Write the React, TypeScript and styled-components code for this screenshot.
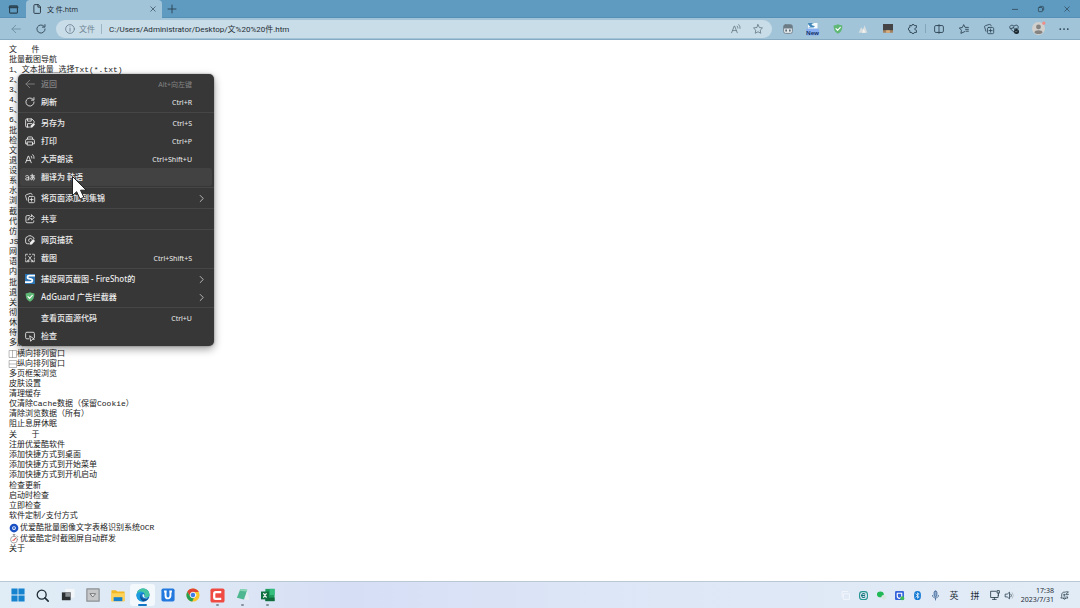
import React from "react";
import styled, { createGlobalStyle } from "styled-components";

const GlobalStyle = createGlobalStyle`
  * { box-sizing: border-box; }
  body {
    margin: 0;
    background: #fff;
    font-family: "Noto Sans", "Noto Sans CJK SC", sans-serif;
    font-size: 8px;
    color: #1f2d36;
  }
  button, input {
    font: inherit;
    color: inherit;
    border: 0;
    padding: 0;
    margin: 0;
    background: none;
  }
`;

/* ---------- layout ---------- */

const Screen = styled.div`
  min-height: 100vh;
  display: grid;
  grid-template-rows: auto 1fr auto;
`;

const TitleBar = styled.header`
  display: flex;
  align-items: stretch;
  height: 18px;
  background: #5f9bc0;
  box-shadow: inset 0 -1px 0 #5690b4;
`;

const IconButton = styled.button<{ $w?: number; $tone?: string }>`
  width: ${(p) => p.$w ?? 25}px;
  flex: none;
  display: flex;
  align-items: center;
  justify-content: center;
  color: ${(p) => p.$tone ?? "#2b4250"};
`;

const Tab = styled.div`
  width: 136px;
  display: flex;
  align-items: center;
  gap: 5px;
  padding: 0 5px 0 6px;
  border-radius: 4px 4px 0 0;
  background: #a2c4d9;
  font-size: 7px;
`;

const TabTitle = styled.span`
  flex: 1;
  white-space: pre;
`;

const WindowButtons = styled.div`
  display: flex;
  margin-left: auto;
`;

const Toolbar = styled.nav`
  display: flex;
  align-items: center;
  height: 22px;
  padding: 0 4px 0 3px;
  background: #a2c4d9;
  border-bottom: 1px solid #86aac1;
`;

const AddressBar = styled.div`
  flex: 1;
  display: flex;
  align-items: center;
  height: 18px;
  margin: 0 3px;
  padding: 0 3px 0 9px;
  border-radius: 9px;
  background: #c9dde8;
`;

const SiteInfo = styled.span`
  display: flex;
  align-items: center;
  gap: 4px;
  padding-right: 6px;
  margin-right: 7px;
  border-right: 1px solid #9db5c3;
  line-height: 9px;
  color: #6d8391;
`;

const AddressInput = styled.input`
  flex: 1;
  min-width: 0;
  height: 14px;
  outline: none;
  font-family: Roboto, "Noto Sans CJK SC", sans-serif;
`;

const ToolDivider = styled.span`
  width: 1px;
  height: 9px;
  background: #84a6bb;
`;

const Page = styled.main`
  position: relative;
  padding: 5px 9px 16px;
  background: #fff;
`;

const Group = styled.ul`
  list-style: none;
  margin: 0 0 1px;
  padding: 0;
`;

const Line = styled.li<{ $tall?: boolean }>`
  display: flex;
  align-items: center;
  gap: ${(p) => (p.$tall ? 1 : 0)}px;
  height: ${(p) => (p.$tall ? 11 : 10)}px;
  line-height: 10px;
  white-space: pre;
  font-family: "Liberation Mono", "Noto Sans CJK SC", monospace;
  color: #222;
`;

/* ---------- context menu ---------- */

const Menu = styled.div`
  position: absolute;
  left: 18px;
  top: 34px;
  width: 196px;
  padding: 1px 0;
  border-radius: 5px;
  background: #373737;
  box-shadow: 0 3px 8px rgba(0, 0, 0, 0.4), 0 0 2px rgba(0, 0, 0, 0.4);
  color: #ececec;
`;

const MenuSection = styled.div`
  & + & {
    margin-top: 1px;
    padding-top: 1px;
    border-top: 1px solid #464646;
  }
`;

const MenuButton = styled.button<{ $hot?: boolean }>`
  display: grid;
  grid-template-columns: 16px 1fr auto 14px;
  align-items: center;
  width: calc(100% - 4px);
  height: 18px;
  margin: 0 2px;
  padding-left: 5px;
  border-radius: 3px;
  text-align: left;
  white-space: pre;
  background: ${(p) => (p.$hot ? "#424242" : "transparent")};
  &:disabled { color: #858585; }
`;

const Label = styled.span`
  padding-bottom: 2px;
  font-weight: 500;
`;

const Shortcut = styled.span`
  font-size: 7px;
  padding-right: 6px;
`;

const Pointer = styled.svg`
  position: absolute;
  left: 71px;
  top: 135px;
  width: 17px;
  height: 26px;
  pointer-events: none;
`;

/* ---------- task bar ---------- */

const TaskBar = styled.footer`
  display: flex;
  align-items: stretch;
  height: 27px;
  padding: 0 6px 0 5px;
  border-top: 1px solid #b9c8d3;
  background: linear-gradient(90deg, #e0edf6 0%, #dce6f5 22%, #d5def5 32%, #dde6f6 55%, #e2ecf6 100%);
`;

const AppButton = styled.button<{ $state?: "open" | "active" }>`
  position: relative;
  width: 25px;
  height: 22px;
  margin-top: 2px;
  display: flex;
  align-items: center;
  justify-content: center;
  border-radius: 3px;
  background: ${(p) => (p.$state === "active" ? "#f3f8fc" : "none")};
  &::after {
    content: "";
    display: ${(p) => (p.$state ? "block" : "none")};
    position: absolute;
    bottom: 0;
    width: ${(p) => (p.$state === "active" ? 9 : 3)}px;
    height: 2px;
    border-radius: 1px;
    background: ${(p) => (p.$state === "active" ? "#1274c5" : "#85909b")};
  }
`;

const Tray = styled.div`
  display: flex;
  margin-left: auto;
`;

const InputMode = styled.button<{ $w: number }>`
  width: ${(p) => p.$w}px;
  font-size: 9px;
`;

const Clock = styled.time`
  display: flex;
  flex-direction: column;
  justify-content: center;
  width: 40px;
  font-size: 7px;
  line-height: 9px;
  text-align: right;
`;

/* ---------- icons ---------- */

const Svg = styled.svg<{ $s: number }>`
  width: ${(p) => p.$s}px;
  height: ${(p) => p.$s}px;
  flex: none;
  overflow: visible;
`;

function Icon({ s = 10, w = 1.4, children }: { s?: number; w?: number; children: React.ReactNode }) {
  return (
    <Svg $s={s} viewBox="0 0 16 16" fill="none" stroke="currentColor" strokeWidth={w} strokeLinecap="round" strokeLinejoin="round" aria-hidden="true">
      {children}
    </Svg>
  );
}

const Back = () => <Icon><path d="M15 8H1.5M7.5 2 1.5 8l6 6" /></Icon>;
const Reload = () => <Icon><path d="M14.5 8A6.5 6.5 0 1 1 12.8 3.6M14.3 1v4h-4" /></Icon>;
const Close = () => <Icon s={6} w={1.8}><path d="m2 2 12 12M14 2 2 14" /></Icon>;
const Chevron = () => <Icon s={7} w={1.6}><path d="m5 1 7 7-7 7" /></Icon>;
const Star = ({ lines }: { lines?: boolean }) => (
  <Icon>
    {lines ? (
      <path d="M9.5 12 3 15l.9-5L.5 6.3l4.8-.6L7.5 1l2.2 4.4H15M10.5 8.5H15M11.5 11.5H15" />
    ) : (
      <path d="m8 1 2.2 4.6 5 .7-3.6 3.5.8 5L8 12.4l-4.4 2.4.8-5L.8 6.3l5-.7Z" />
    )}
  </Icon>
);
const ReadAloud = () => (
  <Icon><path d="M1 14 5.2 3.2h.6L10 14M2.5 10.5h6M10 3.5a4 4 0 0 1 1 3M12.5 1a7 7 0 0 1 2 6" /></Icon>
);
const Collections = () => (
  <Icon w={1.3}>
    <rect x="5.5" y="5.5" width="10" height="10" rx="2" />
    <path d="M10.5 8v5M8 10.5h5M3 11.5 1 5a2 2 0 0 1 1.3-2.400L8.500.7A2 2 0 0 1 11 2l.3 1" />
  </Icon>
);
const Shield = ({ s = 10 }: { s?: number }) => (
  <Icon s={s}>
    <path d="M8 .5c2 1.200 4.500 1.800 7 1.800 0 6-1.500 10.500-7 13.200C2.500 12.800 1 8.300 1 2.300 3.500 2.300 6 1.700 8 .5Z" fill="#5fb875" stroke="none" />
    <path d="m4.800 7.500 2.500 2.800 4.400-5" stroke="#fff" strokeWidth="1.800" />
  </Icon>
);
const FireShot = () => (
  <Icon s={10}>
    <path d="M0 0h16v16H0z" fill="#2c76b8" stroke="none" />
    <path d="M16 2.500H6.500C3.500 2.500 3 7 6 7.500l4 .8c3 .7 2 4.700-1 4.700H0" stroke="#fff" strokeWidth="3" strokeLinecap="butt" />
  </Icon>
);
const FireShotNew = () => (
  <Svg $s={13} viewBox="0 0 26 26" aria-hidden="true">
    <path d="M4 2h19v12H4z" fill="#f7fbfd" />
    <path d="M4 2h12C9 4 10 7 18 8l-3 3H4l5-2C5 7 4 5 4 2Z" fill="#4388ba" />
    <rect x="0" y="13" width="26" height="14" rx="3" fill="#86aef0" />
    <text x="13" y="25" textAnchor="middle" fontSize="12" fontWeight="600" fontFamily="Noto Sans, sans-serif" fill="#102a5c">New</text>
  </Svg>
);

const SaveAs = () => (
  <Icon>
    <path d="M7 14.500H3a2 2 0 0 1-2-2V3.500a2 2 0 0 1 2-2h8l3.500 3.500v3M4 1.500v3.500h6V1.500M4 14.500V9h7" />
    <path d="m8.500 15.500.5-3 4.500-4.500 2.500 2.500-4.500 4.500Z" fill="currentColor" stroke="none" />
  </Icon>
);
const Print = () => (
  <Icon>
    <path d="M4 5V3a1.500 1.500 0 0 1 1.500-1.500h5A1.500 1.500 0 0 1 12 3v2M4 12.500H1V7.500a2.500 2.500 0 0 1 2.500-2.500h9A2.500 2.500 0 0 1 15 7.500v5h-3M4 9.500h8v5H4z" />
  </Icon>
);
const Translate = () => (
  <Icon>
    <path d="M1 6.500c2-1.500 5-1 5 1V13M6 9c-3-.5-5 .5-5 2.200C1 13.500 5 13.500 6 11M9 6h6M11.500 3.500v8M14 7.500c-1 3-2.500 5-4 5s-2-4.500 2.500-4.500c4 0 3.500 4.500 1 5" />
  </Icon>
);
const Share = () => (
  <Icon>
    <path d="M7 2.500H3.500a2 2 0 0 0-2 2v7.500a2 2 0 0 0 2 2H12a2 2 0 0 0 2-2v-1M10.500 1.500l4.500 4-4.500 4V7.200C8 7 6 8 4.800 10c.2-3.500 2.200-6 5.700-6.200Z" />
  </Icon>
);
const WebCapture = () => (
  <Icon>
    <path d="M6.500 14H4a3 3 0 0 1-3-3V6a3 3 0 0 1 3-3l1.500-1.700h4.500L11.500 3A3 3 0 0 1 14.500 6M6.500 10.500a3 3 0 1 1 4.500-4" />
    <path d="m7.500 15.500.5-3.500L13 6.500 16 9.500 11 15Z" fill="currentColor" stroke="none" />
  </Icon>
);
const Snip = () => (
  <Icon w={1.2}>
    <path d="M1 5V2h3M7 2h2M12 2h3v3M15 8v2M1 8v2M1 12v2h2M15 12v2h-2M5.500 5l5 6.500M10.500 5l-5 6.500" />
    <circle cx="5" cy="13" r="1.300" /><circle cx="11" cy="13" r="1.300" />
  </Icon>
);
const Inspect = () => (
  <Icon>
    <path d="M6 12.500H3a2 2 0 0 1-2-2V4a2 2 0 0 1 2-2h10a2 2 0 0 1 2 2v6.500M8 8l7 5-3.500.5L9.500 16Z" />
  </Icon>
);

/* ---------- data ---------- */

const groups: string[][] = [
  ["文   件", "批量截图导航", "1、文本批量_选择Txt(*.txt)", "2、", "3、", "4、", "5、", "6、"],
  ["批", "检", "文", "退", "设", "系", "水", "浏"],
  ["截", "代", "仿", "JS", "网", "语", "内"],
  ["批", "退", "关", "彻", "休", "待", "多屏浏览 口口"],
  ["|横向排列窗口", "-纵向排列窗口", "多页框架浏览", "皮肤设置", "清理缓存", "仅清除Cache数据（保留Cookie）", "清除浏览数据（所有）", "阻止息屏休眠"],
  ["关   于", "注册优爱酷软件", "添加快捷方式到桌面", "添加快捷方式到开始菜单", "添加快捷方式到开机启动"],
  ["检查更新", "启动时检查", "立即检查", "软件定制/支付方式"],
];

type Item = { label: string; icon?: React.ReactNode; keys?: string; sub?: boolean; off?: boolean; hot?: boolean };

const menu: Item[][] = [
  [
    { label: "返回", icon: <Back />, keys: "Alt+向左键", off: true },
    { label: "刷新", icon: <Reload />, keys: "Ctrl+R" },
  ],
  [
    { label: "另存为", icon: <SaveAs />, keys: "Ctrl+S" },
    { label: "打印", icon: <Print />, keys: "Ctrl+P" },
    { label: "大声朗读", icon: <ReadAloud />, keys: "Ctrl+Shift+U" },
    { label: "翻译为 韩语", icon: <Translate />, hot: true },
  ],
  [{ label: "将页面添加到集锦", icon: <Collections />, sub: true }],
  [{ label: "共享", icon: <Share /> }],
  [
    { label: "网页捕获", icon: <WebCapture /> },
    { label: "截图", icon: <Snip />, keys: "Ctrl+Shift+S" },
  ],
  [
    { label: "捕捉网页截图 - FireShot的", icon: <FireShot />, sub: true },
    { label: "AdGuard 广告拦截器", icon: <Shield />, sub: true },
  ],
  [
    { label: "查看页面源代码", keys: "Ctrl+U" },
    { label: "检查", icon: <Inspect /> },
  ],
];

const extensions: [string, React.ReactNode][] = [
  ["脚本管理器", (
    <Icon>
      <rect x="1" y="1" width="14" height="14" rx="3" fill="#e4e9ec" stroke="#6b7c87" />
      <path d="M1 3.500A2.500 2.500 0 0 1 3.500 1h9A2.500 2.500 0 0 1 15 3.500V7H1Z" fill="#6b7c87" stroke="none" />
      <path d="M5 9.500v1.500M11 9.500v1.500" stroke="#51626d" strokeWidth="2.500" />
    </Icon>
  )],
  ["FireShot", <FireShotNew />],
  ["AdGuard", <Shield />],
  ["扩展", (
    <Icon>
      <path d="M1 14 5 5l3 4 2.500-7L15 14Z" fill="#d5dde0" stroke="none" />
      <path d="M6.500 14 9 7l3 7Z" fill="#f5f3ee" stroke="none" />
    </Icon>
  )],
  ["用户脚本", (
    <Icon>
      <path d="M0 0h16v11H0z" fill="#444446" stroke="none" />
      <path d="M0 10h16v4H0z" fill="#a5825c" stroke="none" />
      <path d="M5 10h6v4H5z" fill="#d8b183" stroke="none" />
    </Icon>
  )],
  ["扩展中心", (
    <Icon>
      <path d="M6 2.500a2 2 0 0 1 4 0h3.500V6c-3.500-.5-3.500 4.500 0 4v3.500H10a2 2 0 0 1-4 0H3V10.500a2.500 2.500 0 0 1 0-5V2.500Z" />
    </Icon>
  )],
];

const browserTools: [string, React.ReactNode][] = [
  ["拆分屏幕", <Icon><path d="M6 2.500H3a2 2 0 0 0-2 2v7a2 2 0 0 0 2 2h3M10 2.500h3a2 2 0 0 1 2 2v7a2 2 0 0 1-2 2h-3M6 2.500h4M6 13.500h4M8 1v14" /></Icon>],
  ["收藏夹", <Star lines />],
  ["集锦", <Collections />],
  ["浏览器概要", (
    <Icon>
      <path d="M8 13 2 7.500C-.5 4.500 3-.5 8 3.500c5-4 8 0 6.500 3.500M2.500 7h3L7 4.500 9 9l1.500-2H13" />
      <circle cx="12" cy="12" r="4" fill="#172329" stroke="none" />
      <path d="m10.500 12 1 1 2-2" stroke="#a2c4d9" strokeWidth="1" />
    </Icon>
  )],
  ["用户", (
    <Icon s={13}>
      <circle cx="8" cy="8" r="8" fill="#d1d0cd" stroke="none" />
      <circle cx="8" cy="6" r="3" fill="#858381" stroke="none" />
      <path d="M3 13c0-4 10-4 10 0-2 2.500-8 2.500-10 0Z" fill="#858381" stroke="none" />
      <circle cx="14.500" cy="1.500" r="2" fill="#f08d86" stroke="none" />
    </Icon>
  )],
  ["设置及其他", <Icon><path d="M2 8h.1M8 8h.1M14 8h.1" strokeWidth="2.800" /></Icon>],
];

const apps: { name: string; state?: "open" | "active"; art: React.ReactNode }[] = [
  { name: "开始", art: <Icon s={14}><path d="M.5.500h7v7h-7zM8.500.500h7v7h-7zM.5 8.500h7v7h-7zM8.500 8.500h7v7h-7z" fill="#1683cf" stroke="none" /></Icon> },
  { name: "搜索", art: <Icon s={13} w={1.6}><circle cx="7" cy="7" r="5.500" /><path d="m11 11 4 4" strokeWidth="2" /></Icon> },
  { name: "任务视图", art: <Icon s={14}><path d="M5 1h10.500v10H5z" fill="#f3f6f9" stroke="none" /><path d="M1 5h10v9H1z" fill="#2b2e31" stroke="none" /><path d="M5 5h6v5H5z" fill="#898e92" stroke="none" /></Icon> },
  { name: "工具", art: <Icon s={14}><path d="M1 1h14v14H1z" fill="#c5c7c9" stroke="#8e9194" /><path d="M5 6.500h6L8 10Z" fill="#f1f1f1" stroke="#66696c" strokeWidth="1" /></Icon> },
  { name: "文件资源管理器", art: <Icon s={14}><path d="M.5 2.500h5L7 4h8.500v11H.5z" fill="#f2b824" stroke="none" /><path d="M.5 6h15v9H.5z" fill="#ffd35a" stroke="none" /><path d="M3 10.500h10V15H3z" fill="#1780cc" stroke="none" /></Icon> },
  {
    name: "Edge", state: "active", art: (
      <Icon s={14}>
        <circle cx="8" cy="8" r="7.500" fill="#1479c9" stroke="none" />
        <path d="M.8 7C2-1.500 14-2 15.500 7c.3 4-4 4.500-6 3 2-3-1-5.500-4-5C3 5.300 1.500 6 .8 7Z" fill="#45c5a1" stroke="none" />
        <path d="M.6 7.500C3 2.500 8 3.500 9 6 6 5 4 7 4.500 10s3 5 5 5.300C4 16.500 0 12 .6 7.500Z" fill="#1b9de0" stroke="none" />
        <path d="M6 8c-1 3 2.500 6 8 4-2 3-5 4-7 2.500S4 9.500 6 8Z" fill="#124f96" stroke="none" />
        <path d="M7.500 7.500c1.500-1 2.500 0 2 1.500-.5 1.500 1.500 2.500 4 2-3 1.500-7 0-6-3.500Z" fill="#f3f8fc" stroke="none" />
      </Icon>
    ),
  },
  { name: "优爱酷", art: <Icon s={14}><rect x=".5" y=".5" width="15" height="15" rx="2" fill="#2379dd" stroke="none" /><path d="M3.500 4h3M9.500 4h3M5.200 4v4.500c0 4.500 5.600 4.500 5.600 0V4" stroke="#fff" strokeWidth="2.200" strokeLinecap="butt" /></Icon> },
  {
    name: "Chrome", art: (
      <Icon s={14}>
        <circle cx="8" cy="8" r="7.500" fill="#f9c62e" stroke="none" />
        <path d="M1.500 4.200A7.500 7.500 0 0 1 14.600 4.500H8L4.900 9.700Z" fill="#df4535" stroke="none" />
        <path d="M1.500 4.200 4.900 9.800 9 11.500 7.200 15.500A7.500 7.500 0 0 1 1.500 4.200Z" fill="#279f55" stroke="none" />
        <circle cx="8" cy="8" r="3.200" fill="#3d7ee8" stroke="#fff" strokeWidth="1" />
      </Icon>
    ),
  },
  { name: "Camtasia", state: "open", art: <Icon s={15}><rect x=".5" y=".5" width="15" height="15" rx="2" fill="#f04b43" stroke="none" /><path d="M12 4.500H6A1.500 1.500 0 0 0 4.500 6v4A1.500 1.500 0 0 0 6 11.500h6" stroke="#fff" strokeWidth="2.400" strokeLinecap="butt" /></Icon> },
  { name: "记事本", state: "open", art: <Icon s={14}><path d="m5 1 8 1-4 11-8-2Z" fill="#4eb78f" stroke="none" /><path d="m13 2 2 12-5-1Z" fill="#e7eef0" stroke="none" /><path d="m5 1 8 1-1 2-8-1Z" fill="#8bd7b5" stroke="none" /></Icon> },
  { name: "Excel", state: "open", art: <Icon s={14}><path d="M5 1h10.500v14H5z" fill="#1c9b5b" stroke="none" /><path d="M10 1h5.500v7H10z" fill="#35bd7d" stroke="none" /><path d="M5 11h10.500v4H5z" fill="#126b3c" stroke="none" /><path d="M0 4h9v9H0z" fill="#107040" stroke="none" /><path d="m3 6.500 3 4M6 6.500l-3 4" stroke="#fff" /></Icon> },
];

const trayIcons: [string, React.ReactNode][] = [
  ["窗口", <Icon s={9}><path d="M5 5h10v10H5zM2 11V1h10" stroke="#f6f9fc" /></Icon>],
  ["录屏", <Icon s={9}><rect x="1" y="1" width="14" height="14" rx="5" stroke="#25958f" strokeWidth="2" /><path d="M10.500 5.500a3.500 3.500 0 1 0 0 5M6 8h4" stroke="#16767b" strokeWidth="1.800" /></Icon>],
  ["微信", <Icon s={9}><ellipse cx="6" cy="6" rx="6" ry="5" fill="#21b955" stroke="none" /><ellipse cx="12" cy="11" rx="4.500" ry="4" fill="#d9e7df" stroke="none" /></Icon>],
  ["安全", <Icon s={9}><rect x="0" y="0" width="16" height="16" rx="2" fill="#3765db" stroke="none" /><path d="M4 4h8v5a4 4 0 0 1-8 0Z" stroke="#fff" strokeWidth="2" /><circle cx="13" cy="13" r="3.500" fill="#3dbb55" stroke="none" /></Icon>],
  ["蓝牙", <Icon s={9}><rect x="2" y="0" width="12" height="16" rx="6" fill="#147ad4" stroke="none" /><path d="m5 5 6 5.500L8 13V3l3 2.500L5 11" stroke="#fff" strokeWidth="1.200" /></Icon>],
  ["麦克风", <Icon s={9}><rect x="5.500" y="0" width="5" height="10" rx="2.500" fill="#8caad0" stroke="#38608f" /><path d="M2.500 8c0 6 11 6 11 0M8 12.500V16" stroke="#38608f" /></Icon>],
];

/* ---------- app ---------- */

function PageLine({ text }: { text: string }) {
  const mark = text[0];
  if (mark === "|" || mark === "-") {
    return (
      <Line>
        <Icon s={8} w={1}>
          <path d={mark === "|" ? "M1 1h14v14H1zM7 1v14" : "M1 1h14v14H1zM1 8h14"} stroke="#777" />
        </Icon>
        {text.slice(1)}
      </Line>
    );
  }
  return <Line>{text}</Line>;
}

export default function App() {
  return (
    <Screen>
      <GlobalStyle />
      <div>
        <TitleBar>
          <IconButton $w={26} aria-label="标签页操作">
            <Icon s={9} w={2}><rect x="1" y="1.500" width="14" height="13" rx="1.500" /><path d="M1 4h14" strokeWidth="3.500" /></Icon>
          </IconButton>
          <Tab>
            <Icon><path d="M9.500 1H4.500A1.500 1.500 0 0 0 3 2.500v11A1.500 1.500 0 0 0 4.500 15h7.500a1.500 1.500 0 0 0 1.500-1.500V5ZM9.500 1v4h4" /></Icon>
            <TabTitle>文 件.htm</TabTitle>
            <IconButton $w={9} aria-label="关闭标签页"><Close /></IconButton>
          </Tab>
          <IconButton $w={19} aria-label="新建标签页"><Icon s={8} w={1.8}><path d="M8 0v16M0 8h16" /></Icon></IconButton>
          <WindowButtons>
            <IconButton $w={26} aria-label="最小化"><Icon s={6} w={2}><path d="M1 9h14" /></Icon></IconButton>
            <IconButton $w={26} aria-label="还原"><Icon s={6} w={2}><rect x="1" y="4" width="11" height="11" rx="2" /><path d="M5 1h7a3 3 0 0 1 3 3v7" /></Icon></IconButton>
            <IconButton $w={26} aria-label="关闭"><Close /></IconButton>
          </WindowButtons>
        </TitleBar>
        <Toolbar>
          <IconButton $tone="#6d8e9f" aria-label="后退"><Back /></IconButton>
          <IconButton aria-label="刷新"><Reload /></IconButton>
          <AddressBar>
            <SiteInfo>
              <Icon><circle cx="8" cy="8" r="7" /><path d="M8 7v4.500M8 4.500v.1" /></Icon>
              文件
            </SiteInfo>
            <AddressInput aria-label="地址" defaultValue="C:/Users/Administrator/Desktop/文%20%20件.htm" />
            <IconButton $w={22} $tone="#6a7f8b" aria-label="大声朗读"><ReadAloud /></IconButton>
            <IconButton $w={22} $tone="#6a7f8b" aria-label="添加到收藏夹"><Star /></IconButton>
          </AddressBar>
          {extensions.map(([name, art]) => <IconButton key={name} aria-label={name}>{art}</IconButton>)}
          <ToolDivider />
          {browserTools.map(([name, art]) => <IconButton key={name} aria-label={name}>{art}</IconButton>)}
        </Toolbar>
      </div>

      <Page>
        {groups.map((lines, g) => (
          <Group key={g}>
            {lines.map((text, i) => <PageLine key={i} text={text} />)}
          </Group>
        ))}
        <Group>
          <Line $tall>
            <Icon s={10}><circle cx="8" cy="8" r="5" stroke="#1950c4" strokeWidth="4" /><circle cx="8" cy="8" r="1.500" fill="#1950c4" stroke="none" /></Icon>
            优爱酷批量图像文字表格识别系统OCR
          </Line>
          <Line $tall>
            <Icon s={10} w={1.2}><circle cx="8" cy="9" r="5.500" stroke="#8a8a8a" /><path d="M6.500 1h3M8 1v2.500M13 3l1.500 1.500" stroke="#777" /><path d="M8 9.500 10.500 7M6 10h2" stroke="#e2524b" strokeWidth="1.800" /></Icon>
            优爱酷定时截图屏自动群发
          </Line>
          <Line>关于</Line>
        </Group>

        <Menu role="menu">
          {menu.map((items, s) => (
            <MenuSection key={s}>
              {items.map((it) => (
                <MenuButton key={it.label} role="menuitem" disabled={it.off} $hot={it.hot}>
                  {it.icon ?? <span />}
                  <Label>{it.label}</Label>
                  <Shortcut>{it.keys}</Shortcut>
                  {it.sub ? <Chevron /> : <span />}
                </MenuButton>
              ))}
            </MenuSection>
          ))}
        </Menu>
        <Pointer viewBox="0 0 17 26" aria-hidden="true">
          <path d="M1.500 1.500v19l4.200-3.800 3.300 7.300 3.800-1.800-3.300-7h5.700Z" fill="#fff" stroke="#222" strokeWidth="1" />
        </Pointer>
      </Page>

      <TaskBar>
        {apps.map((a) => <AppButton key={a.name} aria-label={a.name} $state={a.state}>{a.art}</AppButton>)}
        <Tray>
          {trayIcons.map(([name, art]) => <IconButton key={name} $w={18} aria-label={name}>{art}</IconButton>)}
          <InputMode $w={20}>英</InputMode>
          <InputMode $w={22}>拼</InputMode>
          <IconButton $w={18} aria-label="网络"><Icon s={10}><path d="M10 2H1v10h12V8M4 15h6M7 12v3M12 1h3v4h-3zM13.500 5v4" /></Icon></IconButton>
          <IconButton $w={10} aria-label="音量"><Icon s={9}><path d="M1 5.500h3L8 2v12l-4-3.500H1ZM10.500 5.500a4 4 0 0 1 0 5" /><path d="M13 3a8 8 0 0 1 0 10" stroke="#a9b5be" /></Icon></IconButton>
          <Clock>
            <span>17:38</span>
            <span>2023/7/31</span>
          </Clock>
          <IconButton $w={20} aria-label="通知"><Icon s={9}><path d="M9 2C5 1 3 4 3 7v3l-1.500 2.500H14L12.500 10V9M6 13c.5 2.500 3.500 2.500 4 0M10.500 1.500H15L10.500 6H15M6.500 6H9L6.500 9H9" /></Icon></IconButton>
        </Tray>
      </TaskBar>
    </Screen>
  );
}
